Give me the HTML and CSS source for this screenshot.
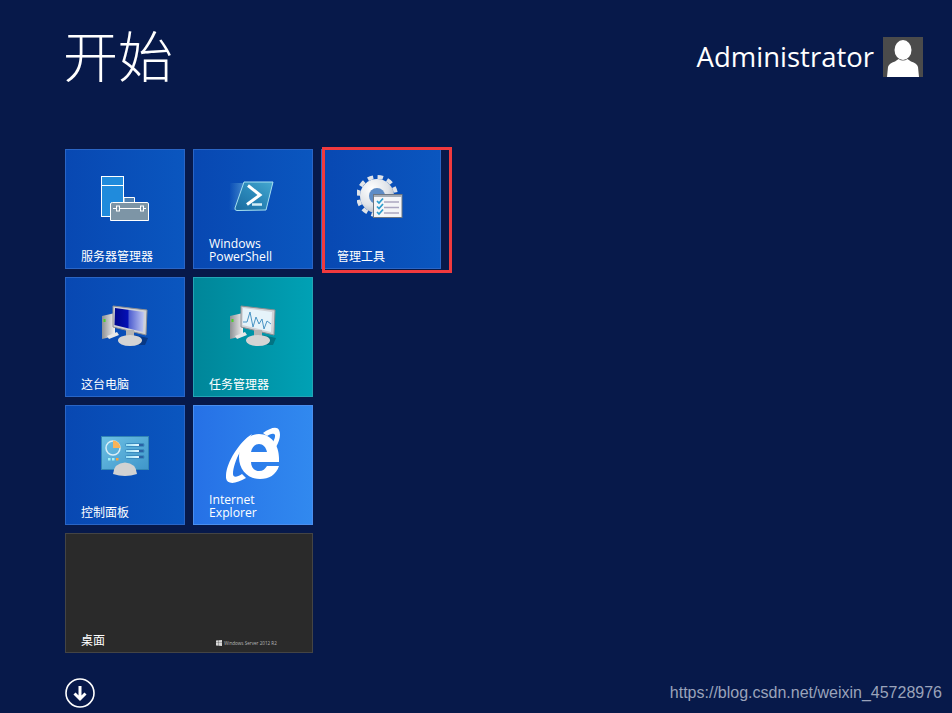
FILE: index.html
```html
<!DOCTYPE html>
<html lang="zh-CN">
<head>
<meta charset="utf-8">
<title>开始</title>
<link rel="stylesheet" href="styles.css">
</head>
<body>
<header class="top">
  <h1 class="title">开始</h1>
  <div class="user">
    <span class="user-name">Administrator</span>
    <svg class="avatar" viewBox="0 0 40 40"><rect width="40" height="40" fill="#4b4b4b"/><ellipse cx="20" cy="13" rx="8.500" ry="10" fill="#fff"/><path d="M4 40 5 30Q6 26 12 24.500L15.500 22Q20 25 24.500 22L28 24.500Q34 26 35 30L36 40Z" fill="#fff"/></svg>
  </div>
</header>
<main class="grid">
  <section class="tile blue">
    <svg class="icon" viewBox="0 0 48 48">
      <rect x="0.500" y="2.500" width="22" height="40" fill="#208bdc" stroke="#fff"/><path d="M1 11.500H22" stroke="#fff"/>
      <path d="M23 23.500H33.500V29H23Z" fill="#4f80b0" stroke="#fff"/>
      <path d="M11.500 28.500H46Q47.500 28.500 47.500 30V46.500H9.500V30Q9.500 28.500 11.500 28.500Z" fill="#7d95a6" stroke="#fff"/>
      <path d="M12 34.500H45" stroke="#fff"/><rect x="15.500" y="32" width="3" height="5" fill="#7d95a6" stroke="#fff"/><rect x="39.500" y="32" width="3" height="5" fill="#7d95a6" stroke="#fff"/>
    </svg>
    <span class="label">服务器管理器</span>
  </section>
  <section class="tile blue">
    <svg class="icon" viewBox="0 0 48 48">
      <defs><linearGradient id="psBlur" x1="0" x2="1"><stop offset="0" stop-color="#6fb6dc" stop-opacity="0"/><stop offset="1" stop-color="#7cc3e4" stop-opacity=".6"/></linearGradient><linearGradient id="psBody" x1="0" y1="1" x2="1" y2="0"><stop offset="0" stop-color="#1a6a9f"/><stop offset=".5" stop-color="#2a87b8"/><stop offset="1" stop-color="#45a8d0"/></linearGradient></defs>
      <path d="M1 9H18L9 36H0Z" fill="url(#psBlur)"/>
      <path d="M15 8H44L37 36 8 36.500Q5.500 36.500 6 34Z" fill="url(#psBody)" stroke="#a6e0f0"/>
      <path d="M19 11.500 31 21 18 30.500" fill="none" stroke="#fff" stroke-width="3"/><path d="M23 30.500H33" stroke="#d5edf6" stroke-width="2.500"/>
    </svg>
    <span class="label latin">Windows<br>PowerShell</span>
  </section>
  <section class="tile blue">
    <svg class="icon" viewBox="0 0 48 48">
      <defs><radialGradient id="gear" cx=".35" cy=".3" r=".8"><stop offset="0" stop-color="#fff"/><stop offset=".6" stop-color="#dfe3e8"/><stop offset="1" stop-color="#a3aebd"/></radialGradient><filter id="soft"><feGaussianBlur stdDeviation=".6"/></filter></defs>
      <g filter="url(#soft)">
        <circle cx="20" cy="22" r="17" fill="url(#gear)"/>
        <circle cx="20" cy="22" r="19" fill="none" stroke="#dfe3e8" stroke-width="4" stroke-dasharray="5.500 4.450"/>
        <circle cx="20" cy="22" r="8" fill="#5d8cc6"/>
      </g>
      <rect x="16.500" y="20.500" width="28.500" height="23" fill="#f4f5f7" stroke="#6c7682"/><rect x="17" y="21" width="28" height="2" fill="#a6adb6"/>
      <path d="M20 27l2 2 4-4.500M20 32.500l2 2 4-4.500M20 38l2 2 4-4.500" fill="none" stroke="#2a9ccc" stroke-width="1.700"/>
      <path d="M27 28H42M27 33.500H42M27 39H42" stroke="#aaa6c0" stroke-width="1.500"/>
    </svg>
    <span class="label">管理工具</span>
    <span class="highlight"></span>
  </section>
  <section class="tile blue">
    <svg class="icon" viewBox="0 0 48 48">
      <defs><linearGradient id="screen" x1="0" y1="0" x2="1" y2="0"><stop offset="0" stop-color="#00068c"/><stop offset=".45" stop-color="#0410b4"/><stop offset=".5" stop-color="#5060d0"/><stop offset="1" stop-color="#c0c8f4"/></linearGradient><linearGradient id="metal" x1="0" x2="1"><stop offset="0" stop-color="#8d9094"/><stop offset="1" stop-color="#f2f2f2"/></linearGradient></defs>
      <path d="M1 14 14 11V34L1 37Z" fill="url(#metal)"/><rect x="2.500" y="17" width="2" height="3" fill="#4cd02a"/><path d="M6 34 16 30 18 33 8 37Z" fill="#e8e8e8"/>
      <path d="M12 4 46 8 45 33 12 25Z" fill="#d0d2d6" stroke="#8c8e92"/>
      <path d="M14 6 43 10 42 30 13.500 23Z" fill="url(#screen)"/>
      <path d="M33 33 47 36 44 43H36Z" fill="#05204f" opacity=".5"/>
      <rect x="25" y="28" width="8" height="8" fill="#b4b4b4"/><ellipse cx="29" cy="38.500" rx="12" ry="5.500" fill="#d4d4d4"/>
    </svg>
    <span class="label">这台电脑</span>
  </section>
  <section class="tile teal">
    <svg class="icon" viewBox="0 0 48 48">
      <path d="M1 14 14 11V34L1 37Z" fill="url(#metal)"/><rect x="2.500" y="17" width="2" height="3" fill="#4cd02a"/><path d="M6 34 16 30 18 33 8 37Z" fill="#e8e8e8"/>
      <path d="M12 4 46 8 45 33 12 25Z" fill="#d0d2d6" stroke="#8c8e92"/>
      <path d="M14 6 43 10 42 30 13.500 23Z" fill="#e6f3fa"/>
      <path d="M14 20H18L21 10 24 25 27 15 30 22 33 17 35 27 38 19 42 22" fill="none" stroke="#4a94c4"/>
      <path d="M33 33 47 36 44 43H36Z" fill="#04505c" opacity=".5"/>
      <rect x="25" y="28" width="8" height="8" fill="#b4b4b4"/><ellipse cx="29" cy="38.500" rx="12" ry="5.500" fill="#d4d4d4"/>
    </svg>
    <span class="label">任务管理器</span>
  </section>
  <section class="tile empty"></section>
  <section class="tile blue">
    <svg class="icon" viewBox="0 0 48 48">
      <defs><linearGradient id="panel" x1="0" y1="0" x2="1" y2="1"><stop offset="0" stop-color="#6cc0e4"/><stop offset="1" stop-color="#3f96ca"/></linearGradient><linearGradient id="bar" x1="0" x2="1"><stop offset="0" stop-color="#8fdcf4"/><stop offset=".7" stop-color="#e4f8ff"/><stop offset=".75" stop-color="#2a62a4"/><stop offset="1" stop-color="#2a62a4"/></linearGradient></defs>
      <rect x="0.500" y="6.500" width="47" height="33" fill="url(#panel)" stroke="#3285b4"/>
      <circle cx="12" cy="18" r="7" fill="none" stroke="#d8eef8" stroke-width="1.500"/><path d="M12 10.500A7.500 7.500 0 0 1 19.500 18H12Z" fill="#f7b35a"/>
      <rect x="24.500" y="13.500" width="18.500" height="3" rx="1" fill="url(#bar)" stroke="#3a8cc0"/><rect x="24.500" y="19.500" width="18.500" height="3" rx="1" fill="url(#bar)" stroke="#3a8cc0"/><rect x="24.500" y="25.500" width="18.500" height="3" rx="1" fill="url(#bar)" stroke="#3a8cc0"/>
      <rect x="7" y="28" width="2.500" height="2.500" fill="#a0f0f8"/><rect x="11" y="28" width="2.500" height="2.500" fill="#a0f0f8"/><rect x="15" y="28" width="2.500" height="2.500" fill="#f8a040"/>
      <path d="M12 44Q13 33 24 32.500 35 33 36 44Q24 48 12 44Z" fill="#d2d2d2"/>
    </svg>
    <span class="label">控制面板</span>
  </section>
  <section class="tile ie">
    <svg class="icon icon-ie" viewBox="0 0 54 57">
      <path fill-rule="evenodd" fill="#fff" d="M53 35V31C53 18 45 7 33 7 21 7 13 18 13 30 13 43 22 52 34 52 43 52 50 48 53 39H41C39 42 37 44 33 44 28 44 25 40 25 35ZM25 25C26 20 29 17 33 17 37 17 40 20 41 25Z"/>
      <path fill="#fff" d="M26 7C12 16-1 38 0 51 1 58 10 57 20 51L16 47C10 51 7 50 7 47 7 41 10 32 14 25ZM37 6C44 1 51-1 53 3 55 7 54 13 50 20L47 15C49 11 50 8 48 7 46 6 43 8 41 9Z"/>
    </svg>
    <span class="label latin">Internet<br>Explorer</span>
  </section>
  <section class="tile desktop">
    <span class="label">桌面</span>
    <span class="brand">
      <svg class="brand-logo" viewBox="0 0 6 6"><path d="M0 .600 2.700.200V2.800H0ZM3 .200 6 0V2.800H3ZM0 3.100H2.700V5.800L0 5.400ZM3 3.100H6V6L3 5.800Z" fill="#d8d8d8"/></svg>
      <span>Windows Server 2012 R2</span>
    </span>
  </section>
</main>
<footer class="bottom">
  <svg class="down" viewBox="0 0 30 30"><circle cx="15" cy="15" r="14" fill="none" stroke="#fff" stroke-width="1.600"/><path d="M15 8V21M9.500 15.500 15 21 20.500 15.500" fill="none" stroke="#fff" stroke-width="3"/></svg>
  <span class="watermark">https://blog.csdn.net/weixin_45728976</span>
</footer>
</body>
</html>
```

FILE: styles.css
```css
* { box-sizing: border-box; }
html, body { margin: 0; height: 100%; }
body {
  width: 952px;
  height: 713px;
  overflow: hidden;
  background: #07194a;
  color: #fff;
  font-family: "Open Sans", "Noto Sans CJK SC", sans-serif;
  display: flex;
  flex-direction: column;
}
.top {
  display: flex;
  justify-content: space-between;
  align-items: flex-start;
  padding: 0 29px 0 63px;
  height: 149px;
}
.title {
  margin: 17px 0 0;
  font: 300 55px/72px "Noto Sans CJK SC", sans-serif;
}
.user {
  display: flex;
  align-items: center;
  gap: 9px;
  margin-top: 37px;
}
.user-name { font-size: 27.500px; line-height: 38px; }
.avatar { width: 40px; height: 40px; display: block; }
.grid {
  display: grid;
  grid-template-columns: repeat(3, 120px);
  grid-auto-rows: 120px;
  gap: 8px;
  padding-left: 65px;
}
.tile {
  position: relative;
  display: flex;
  flex-direction: column;
  align-items: center;
  padding: 24px 0 6px;
  border: 1px solid #2a65c5;
}
.blue { background: linear-gradient(90deg, #0848b2, #0a56bf); }
.teal { background: linear-gradient(90deg, #008699, #00a1b5); border-color: #23a5b5; }
.ie { background: linear-gradient(90deg, #2671e6, #3189ef); border-color: #4a8eee; padding-top: 21px; }
.empty { visibility: hidden; }
.desktop {
  grid-column: span 2;
  background: #2a2a2a;
  border-color: #444;
  justify-content: flex-end;
  align-items: stretch;
}
.icon { width: 48px; height: 48px; display: block; flex: none; }
.icon-ie { width: 54px; height: 57px; }
.label {
  margin-top: auto;
  align-self: flex-start;
  padding-left: 15px;
  font: 12px/13px "Noto Sans CJK SC", sans-serif;
}
.latin { font: 12.200px/13px "Open Sans", sans-serif; margin-bottom: -1px; }
.brand {
  position: absolute;
  left: 150px;
  bottom: 6px;
  display: flex;
  align-items: center;
  gap: 2px;
  color: #b8b8b8;
  font: 4.600px/6px "Open Sans", sans-serif;
  white-space: nowrap;
}
.brand-logo { width: 6px; height: 6px; }
.highlight {
  position: absolute;
  left: 0;
  top: -3px;
  width: 130px;
  height: 126px;
  border: 3px solid #f03a3e;
}
.bottom {
  display: flex;
  justify-content: space-between;
  align-items: center;
  padding: 25px 10px 0 65px;
}
.down { width: 30px; height: 30px; display: block; }
.watermark {
  font: 16px/20px "Liberation Sans", sans-serif;
  color: #9aa3ba;
}
```
